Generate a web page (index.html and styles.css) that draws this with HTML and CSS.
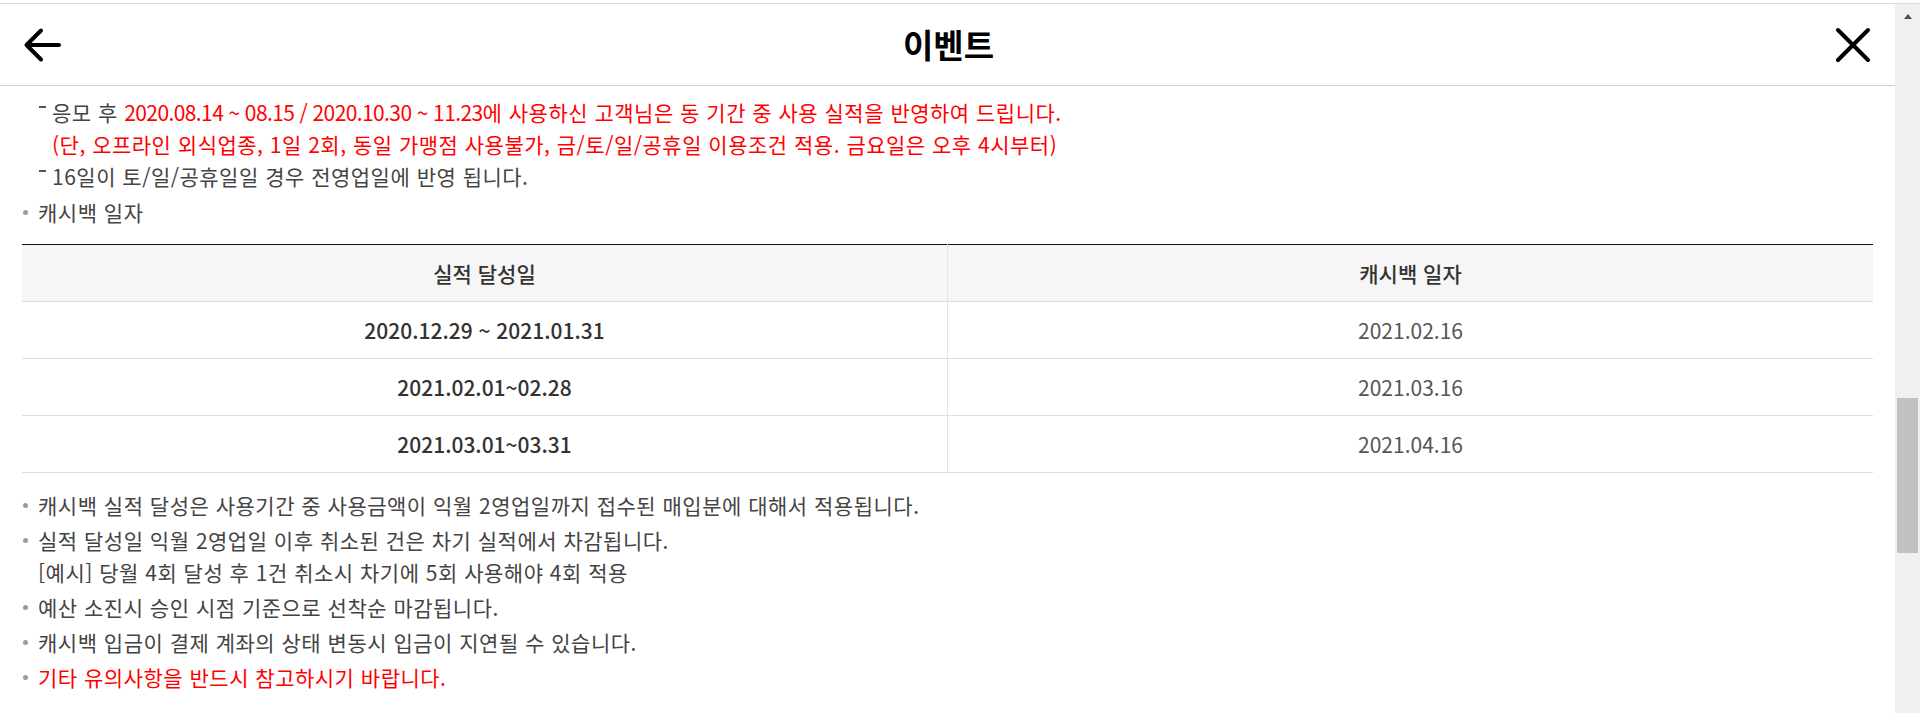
FILE: index.html
```html
<!DOCTYPE html>
<html lang="ko">
<head>
<meta charset="utf-8">
<title>이벤트</title>
<link rel="stylesheet" href="styles.css">
</head>
<body>
<div class="window">
  <div class="topline"></div>
  <div class="frame">
    <div class="page">
      <header class="bar">
        <button class="icon-btn" aria-label="뒤로">
          <svg width="40" height="36" viewBox="0 0 40 36"><path d="M37 18 H5 M19 3.5 L4.5 18 L19 32.5" fill="none" stroke="#000" stroke-width="4" stroke-linecap="round" stroke-linejoin="round"/></svg>
        </button>
        <h1 class="title">이벤트</h1>
        <button class="icon-btn" aria-label="닫기">
          <svg width="36" height="36" viewBox="0 0 36 36"><path d="M3 3 L33 33 M33 3 L3 33" fill="none" stroke="#000" stroke-width="4" stroke-linecap="round"/></svg>
        </button>
      </header>
      <div class="content">
        <ul class="sub">
          <li>응모 후 <span class="red"><span class="num">2020.08.14 ~ 08.15 / 2020.10.30 ~ 11.23</span>에 사용하신 고객님은 동 기간 중 사용 실적을 반영하여 드립니다.<br>(단, 오프라인 외식업종, 1일 2회, 동일 가맹점 사용불가, 금/토/일/공휴일 이용조건 적용. 금요일은 오후 4시부터)</span></li>
          <li>16일이 토/일/공휴일일 경우 전영업일에 반영 됩니다.</li>
        </ul>
        <ul class="dots">
          <li>캐시백 일자</li>
        </ul>
        <table class="tbl">
          <thead>
            <tr><th>실적 달성일</th><th>캐시백 일자</th></tr>
          </thead>
          <tbody>
            <tr><td class="strong">2020.12.29 ~ 2021.01.31</td><td>2021.02.16</td></tr>
            <tr><td class="strong">2021.02.01~02.28</td><td>2021.03.16</td></tr>
            <tr><td class="strong">2021.03.01~03.31</td><td>2021.04.16</td></tr>
          </tbody>
        </table>
        <ul class="dots after">
          <li>캐시백 실적 달성은 사용기간 중 사용금액이 익월 2영업일까지 접수된 매입분에 대해서 적용됩니다.</li>
          <li>실적 달성일 익월 2영업일 이후 취소된 건은 차기 실적에서 차감됩니다.<br>[예시] 당월 4회 달성 후 1건 취소시 차기에 5회 사용해야 4회 적용</li>
          <li>예산 소진시 승인 시점 기준으로 선착순 마감됩니다.</li>
          <li>캐시백 입금이 결제 계좌의 상태 변동시 입금이 지연될 수 있습니다.</li>
          <li class="red">기타 유의사항을 반드시 참고하시기 바랍니다.</li>
        </ul>
      </div>
    </div>
    <div class="scrollbar">
      <div class="sb-btn"><span class="sb-arrow"></span></div>
      <div class="sb-thumb"></div>
    </div>
  </div>
</div>
</body>
</html>
```
FILE: styles.css
```css
html, body {
  margin: 0;
  padding: 0;
  height: 713px;
  overflow: hidden;
  background: #fff;
}
body {
  font-family: "Noto Sans CJK KR", "Noto Sans", sans-serif;
  color: #444;
}
.window {
  display: flex;
  flex-direction: column;
  height: 713px;
}
.topline {
  height: 3px;
  border-bottom: 1px solid #dcdcdc;
  flex: none;
}
.frame {
  flex: 1;
  display: flex;
  min-height: 0;
}
.page {
  flex: 1;
  min-width: 0;
  overflow: hidden;
}
.bar {
  height: 81px;
  border-bottom: 1px solid #cfcfcf;
  display: flex;
  align-items: center;
  justify-content: space-between;
  padding: 0 24px 0 22px;
}
.icon-btn {
  border: 0;
  background: none;
  padding: 0;
  margin: 0;
  display: flex;
  align-items: center;
  cursor: pointer;
}
.title {
  margin: 0;
  font-size: 33px;
  font-weight: 700;
  color: #000;
  letter-spacing: 0;
  line-height: 1;
}
.content {
  padding: 10px 22px 0 22px;
  font-size: 21px;
  letter-spacing: 0.5px;
  line-height: 32px;
}
ul {
  list-style: none;
  margin: 0;
  padding: 0;
}
.red {
  color: #ff0000;
}
.num {
  letter-spacing: -0.6px;
}
.sub li {
  position: relative;
  padding-left: 30px;
}
.sub li::before {
  content: "";
  position: absolute;
  left: 17px;
  top: 10px;
  width: 7px;
  height: 2px;
  background: #555;
}
.dots {
  margin-top: 4px;
}
.dots li {
  position: relative;
  padding-left: 16px;
  margin-bottom: 3px;
}
.dots li::before {
  content: "";
  position: absolute;
  left: 1px;
  top: 14px;
  width: 5px;
  height: 5px;
  border-radius: 50%;
  background: #999;
}
.dots.after {
  margin-top: 16px;
}
.tbl {
  width: 100%;
  margin-top: 16px;
  border-collapse: collapse;
  table-layout: fixed;
  border-top: 1px solid #111;
  font-size: 21px;
  letter-spacing: 0;
}
.tbl th {
  height: 56px;
  padding: 0;
  background: #f6f6f6;
  font-weight: 500;
  color: #333;
  border-bottom: 1px solid #dedede;
  text-align: center;
}
.tbl td {
  height: 56px;
  padding: 0;
  text-align: center;
  color: #555;
  border-bottom: 1px solid #dedede;
}
.tbl th + th,
.tbl td + td {
  border-left: 1px solid #e6e6e6;
}
.tbl td.strong {
  color: #333;
  font-weight: 500;
}
.scrollbar {
  width: 25px;
  flex: none;
  background: #f0f0f0;
  display: flex;
  flex-direction: column;
  align-items: center;
}
.sb-btn {
  height: 25px;
  width: 100%;
  display: flex;
  justify-content: center;
  align-items: center;
}
.sb-arrow {
  width: 0;
  height: 0;
  border-left: 4px solid transparent;
  border-right: 4px solid transparent;
  border-bottom: 5px solid #505050;
}
.sb-thumb {
  margin-top: 369px;
  width: 21px;
  height: 155px;
  background: #c1c1c1;
}
```
